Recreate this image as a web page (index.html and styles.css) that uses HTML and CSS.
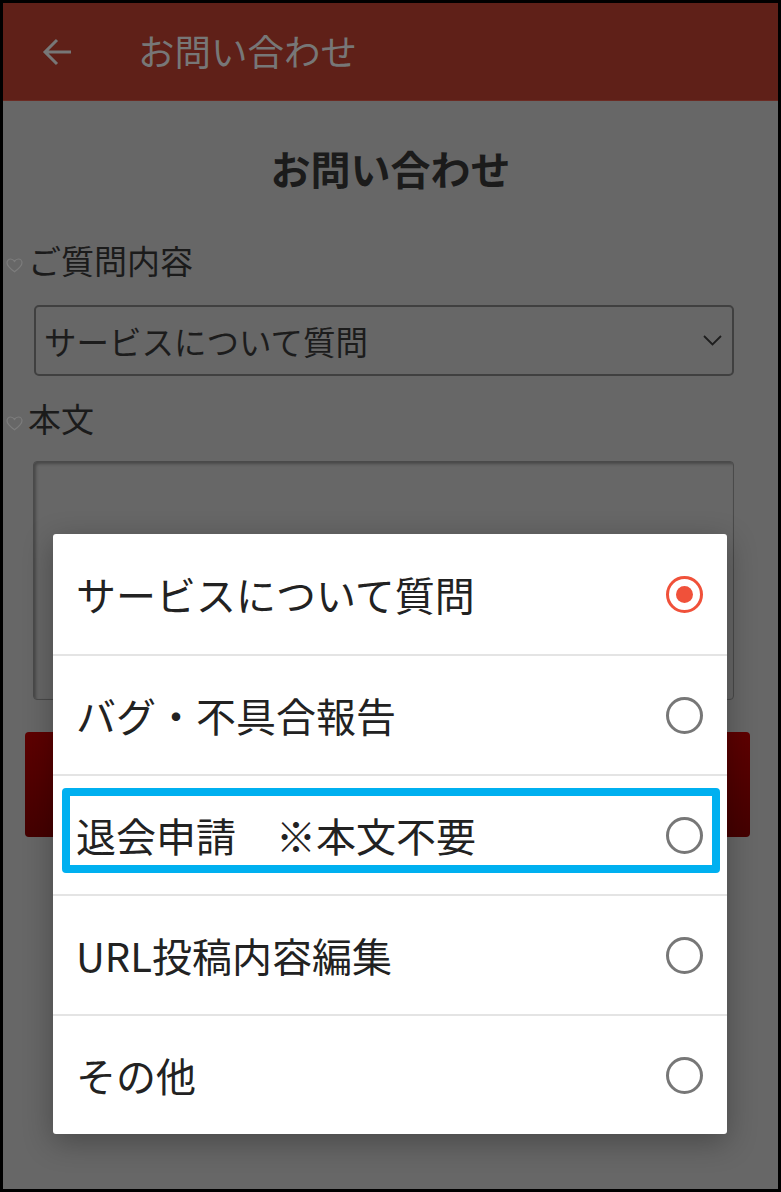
FILE: index.html
```html
<!DOCTYPE html>
<html lang="ja">
<head>
<meta charset="utf-8">
<title>お問い合わせ</title>
<link rel="stylesheet" href="styles.css">
</head>
<body>
<div class="frame">
  <header class="appbar">
    <svg class="back" width="30" height="28" viewBox="0 0 30 28"><path d="M29 14H3M15 2L3 14l12 12" fill="none" stroke="#777" stroke-width="3"/></svg>
    <span class="appbar-title">お問い合わせ</span>
  </header>
  <main class="page">
    <h1 class="page-title">お問い合わせ</h1>
    <div class="field-label">
      <svg class="heart" width="17" height="15" viewBox="0 0 17 15"><path d="M8.5 13.8C4 10.5 1 8 1 4.8 1 2.7 2.6 1 4.6 1c1.6 0 3 1 3.9 2.4C9.4 2 10.8 1 12.4 1 14.4 1 16 2.7 16 4.8c0 3.2-3 5.7-7.5 9z" fill="none" stroke="#7c7c7c" stroke-width="1.2"/></svg>
      <span>ご質問内容</span>
    </div>
    <div class="select">
      <span>サービスについて質問</span>
      <svg width="19" height="11" viewBox="0 0 19 11"><path d="M1 1l8.5 8.5L18 1" fill="none" stroke="#1e1e1e" stroke-width="1.8"/></svg>
    </div>
    <div class="field-label label-body">
      <svg class="heart" width="17" height="15" viewBox="0 0 17 15"><path d="M8.5 13.8C4 10.5 1 8 1 4.8 1 2.7 2.6 1 4.6 1c1.6 0 3 1 3.9 2.4C9.4 2 10.8 1 12.4 1 14.4 1 16 2.7 16 4.8c0 3.2-3 5.7-7.5 9z" fill="none" stroke="#7c7c7c" stroke-width="1.2"/></svg>
      <span>本文</span>
    </div>
    <div class="textarea"></div>
    <div class="submit"></div>
  </main>

  <div class="dialog">
    <div class="option"><span>サービスについて質問</span><span class="radio checked"></span></div>
    <div class="option"><span>バグ・不具合報告</span><span class="radio"></span></div>
    <div class="option highlighted"><span>退会申請　※本文不要</span><span class="radio"></span><span class="mark"></span></div>
    <div class="option"><span>URL投稿内容編集</span><span class="radio"></span></div>
    <div class="option"><span>その他</span><span class="radio"></span></div>
  </div>
</div>
</body>
</html>
```

FILE: styles.css
```css
html, body {
  margin: 0;
  padding: 0;
}
body {
  font-family: "Noto Sans CJK JP", "Noto Sans", sans-serif;
}
.frame {
  position: relative;
  width: 781px;
  height: 1192px;
  box-sizing: border-box;
  border: 3px solid #000;
  background: #676767;
  overflow: hidden;
}
.appbar {
  height: 97px;
  border-bottom: 1px solid #6b2b23;
  background: #5f2018;
  display: flex;
  align-items: center;
  padding-left: 39px;
}
.back {
  display: block;
}
.appbar-title {
  margin-left: 66px;
  font-size: 36.5px;
  line-height: 1;
  color: #777;
}
.page {
  display: flex;
  flex-direction: column;
}
.page-title {
  margin: 37px 0 0;
  font-size: 40px;
  line-height: 60px;
  font-weight: bold;
  text-align: center;
  color: #1b1b1b;
}
.field-label {
  margin-top: 42px;
  display: flex;
  align-items: center;
  padding-left: 3px;
  font-size: 33px;
  line-height: 40px;
  color: #1b1b1b;
}
.heart {
  margin-right: 5px;
  margin-top: 10px;
}
.label-body {
  margin-top: 22px;
}
.select {
  margin: 25px 0 0 31px;
  width: 700px;
  height: 71px;
  box-sizing: border-box;
  border: 2px solid #404040;
  border-radius: 5px;
  display: flex;
  align-items: center;
  justify-content: space-between;
  padding: 0 10px 0 8px;
  font-size: 32.5px;
  color: #1c1c1c;
}
.textarea {
  margin: 23px 0 0 30px;
  width: 701px;
  height: 239px;
  box-sizing: border-box;
  border: 1px solid #4a4a4a;
  border-radius: 4px;
  box-shadow: inset 2px 2px 3px rgba(0, 0, 0, 0.3);
}
.submit {
  margin: 32px 0 0 22px;
  width: 725px;
  height: 105px;
  border-radius: 4px;
  background: linear-gradient(#5e0000, #440000);
}
.dialog {
  position: absolute;
  left: 50px;
  top: 531px;
  width: 674px;
  background: #fff;
  border-radius: 3px;
  box-shadow: 0 8px 30px rgba(0, 0, 0, 0.3);
}
.option {
  position: relative;
  height: 120px;
  box-sizing: border-box;
  display: flex;
  align-items: center;
  justify-content: space-between;
  padding: 0 24px 0 23px;
  font-size: 40px;
  color: #222;
}
.option + .option {
  border-top: 2px solid #e4e4e4;
}
.radio {
  width: 37px;
  height: 37px;
  box-sizing: border-box;
  border: 3px solid #777;
  border-radius: 50%;
  display: flex;
  align-items: center;
  justify-content: center;
}
.radio.checked {
  border-color: #f0513a;
}
.radio.checked::after {
  content: "";
  width: 17px;
  height: 17px;
  border-radius: 50%;
  background: #f0513a;
}
.mark {
  position: absolute;
  top: 12px;
  left: 9px;
  right: 7px;
  height: 85px;
  box-sizing: border-box;
  border: 8px solid #00b0f0;
  border-radius: 4px;
}
```
